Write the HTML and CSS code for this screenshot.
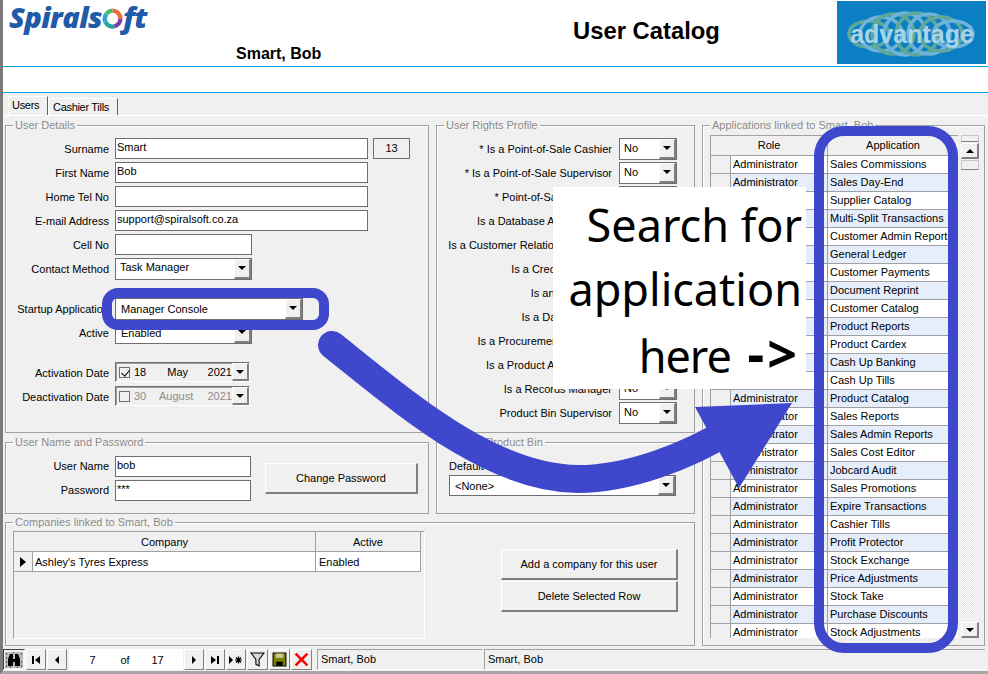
FILE: index.html
```html
<!DOCTYPE html>
<html lang="en">
<head>
<meta charset="utf-8">
<title>User Catalog</title>
<link rel="stylesheet" href="styles.css">
</head>
<body>
<div class="window">
  <header class="head">
    <div class="brand">
      <div class="logo">Spirals<svg class="logo-o" viewBox="0 0 24 24"><path d="M12 3a9 9 0 0 1 9 9" fill="none" stroke="#f26b38" stroke-width="5"/><path d="M21 12a9 9 0 0 1-7 9" fill="none" stroke="#7b3fa0" stroke-width="5"/><path d="M14 21a9 9 0 0 1-10-5" fill="none" stroke="#26a69a" stroke-width="5"/><path d="M4 16a9 9 0 0 1 1-9" fill="none" stroke="#3aa0d8" stroke-width="5"/><path d="M5 7a9 9 0 0 1 7-4" fill="none" stroke="#4cb86a" stroke-width="5"/></svg>ft</div>
      <div class="who">Smart, Bob</div>
    </div>
    <h1 class="title">User Catalog</h1>
    <div class="adv">
      <svg viewBox="0 0 149 63" class="adv-art">
        <g fill="none" stroke-width="3.500">
          <ellipse cx="32" cy="33" rx="20" ry="13" stroke="#5fa79a"/>
          <ellipse cx="44" cy="33" rx="21" ry="17" stroke="#6fb4d8"/>
          <ellipse cx="56" cy="33" rx="21" ry="20" stroke="#5fa79a"/>
          <ellipse cx="68" cy="33" rx="21" ry="21" stroke="#6fb4d8"/>
          <ellipse cx="80" cy="33" rx="21" ry="21" stroke="#5fa79a"/>
          <ellipse cx="92" cy="33" rx="21" ry="20" stroke="#6fb4d8"/>
          <ellipse cx="104" cy="33" rx="21" ry="17" stroke="#5fa79a"/>
          <ellipse cx="116" cy="33" rx="20" ry="13" stroke="#6fb4d8"/>
        </g>
        <text x="75" y="42" class="adv-text">advantage</text>
      </svg>
    </div>
  </header>
  <div class="strip"></div>

  <nav class="tabs">
    <span class="tab tab-on">Users</span>
    <span class="tab">Cashier Tills</span>
  </nav>

  <main class="panels">
    <fieldset class="group g-details">
      <legend>User Details</legend>
      <div class="row"><label>Surname</label><div class="line"><span class="field f-wide">Smart</span><span class="field f-id">13</span></div></div>
      <div class="row"><label>First Name</label><span class="field f-wide">Bob</span></div>
      <div class="row"><label>Home Tel No</label><span class="field f-wide"></span></div>
      <div class="row"><label>E-mail Address</label><span class="field f-wide">support@spiralsoft.co.za</span></div>
      <div class="row"><label>Cell No</label><span class="field f-short"></span></div>
      <div class="row"><label>Contact Method</label><div class="combo c-short"><span>Task Manager</span><i></i></div></div>
      <div class="row row-gap"><label>Startup Application</label><div class="combo c-start c-low"><span>Manager Console</span><i></i></div></div>
      <div class="row"><label>Active</label><div class="combo c-short c-low"><span>Enabled</span><i></i></div></div>
      <div class="row row-gap"><label>Activation Date</label><div class="date"><b class="check on"></b><span class="d1">18</span><span class="d2">May</span><span class="d3">2021</span><i></i></div></div>
      <div class="row"><label>Deactivation Date</label><div class="date off"><b class="check"></b><span class="d1">30</span><span class="d2">August</span><span class="d3">2021</span><i></i></div></div>
    </fieldset>

    <fieldset class="group g-rights">
      <legend>User Rights Profile</legend>
      <div class="rrow"><label>* Is a Point-of-Sale Cashier</label><div class="combo c-no"><span>No</span><i></i></div></div>
      <div class="rrow"><label>* Is a Point-of-Sale Supervisor</label><div class="combo c-no"><span>No</span><i></i></div></div>
      <div class="rrow"><label>* Point-of-Sale Manager</label><div class="combo c-no"><span>No</span><i></i></div></div>
      <div class="rrow"><label>Is a Database Administrator</label><div class="combo c-no"><span>No</span><i></i></div></div>
      <div class="rrow"><label>Is a Customer Relations Manager</label><div class="combo c-no"><span>No</span><i></i></div></div>
      <div class="rrow"><label>Is a Credit Controller</label><div class="combo c-no"><span>No</span><i></i></div></div>
      <div class="rrow"><label>Is an Accountant</label><div class="combo c-no"><span>No</span><i></i></div></div>
      <div class="rrow"><label>Is a Data Manager</label><div class="combo c-no"><span>No</span><i></i></div></div>
      <div class="rrow"><label>Is a Procurement Controller</label><div class="combo c-no"><span>No</span><i></i></div></div>
      <div class="rrow"><label>Is a Product Administrator</label><div class="combo c-no"><span>No</span><i></i></div></div>
      <div class="rrow"><label>Is a Records Manager</label><div class="combo c-no"><span>No</span><i></i></div></div>
      <div class="rrow"><label>Product Bin Supervisor</label><div class="combo c-no"><span>No</span><i></i></div></div>
    </fieldset>

    <fieldset class="group g-apps">
      <legend>Applications linked to Smart, Bob</legend>
      <div class="apps">
        <div class="apps-clip">
          <table class="apps-table">
            <colgroup><col class="col-sel"><col class="col-role"><col class="col-app"></colgroup>
            <thead><tr><th colspan="2">Role</th><th>Application</th></tr></thead>
            <tbody>
              <tr><td></td><td>Administrator</td><td>Sales Commissions</td></tr>
              <tr><td></td><td>Administrator</td><td>Sales Day-End</td></tr>
              <tr><td></td><td>Administrator</td><td>Supplier Catalog</td></tr>
              <tr><td></td><td>Administrator</td><td>Multi-Split Transactions</td></tr>
              <tr><td></td><td>Administrator</td><td>Customer Admin Reports</td></tr>
              <tr><td></td><td>Administrator</td><td>General Ledger</td></tr>
              <tr><td></td><td>Administrator</td><td>Customer Payments</td></tr>
              <tr><td></td><td>Administrator</td><td>Document Reprint</td></tr>
              <tr><td></td><td>Administrator</td><td>Customer Catalog</td></tr>
              <tr><td></td><td>Administrator</td><td>Product Reports</td></tr>
              <tr><td></td><td>Administrator</td><td>Product Cardex</td></tr>
              <tr><td></td><td>Administrator</td><td>Cash Up Banking</td></tr>
              <tr><td></td><td>Administrator</td><td>Cash Up Tills</td></tr>
              <tr><td></td><td>Administrator</td><td>Product Catalog</td></tr>
              <tr><td></td><td>Administrator</td><td>Sales Reports</td></tr>
              <tr><td></td><td>Administrator</td><td>Sales Admin Reports</td></tr>
              <tr><td></td><td>Administrator</td><td>Sales Cost Editor</td></tr>
              <tr><td></td><td>Administrator</td><td>Jobcard Audit</td></tr>
              <tr><td></td><td>Administrator</td><td>Sales Promotions</td></tr>
              <tr><td></td><td>Administrator</td><td>Expire Transactions</td></tr>
              <tr><td></td><td>Administrator</td><td>Cashier Tills</td></tr>
              <tr><td></td><td>Administrator</td><td>Profit Protector</td></tr>
              <tr><td></td><td>Administrator</td><td>Stock Exchange</td></tr>
              <tr><td></td><td>Administrator</td><td>Price Adjustments</td></tr>
              <tr><td></td><td>Administrator</td><td>Stock Take</td></tr>
              <tr><td></td><td>Administrator</td><td>Purchase Discounts</td></tr>
              <tr><td></td><td>Administrator</td><td>Stock Adjustments</td></tr>
            </tbody>
          </table>
        </div>
        <div class="scroll">
          <span class="sb-cap"></span>
          <span class="sb-btn"><i class="up"></i></span>
          <span class="sb-thumb"></span>
          <span class="sb-track"></span>
          <span class="sb-btn"><i></i></span>
        </div>
      </div>
    </fieldset>

    <fieldset class="group g-login">
      <legend>User Name and Password</legend>
      <div class="login">
        <div class="login-fields">
          <div class="row"><label>User Name</label><span class="field f-login">bob</span></div>
          <div class="row"><label>Password</label><span class="field f-login">***</span></div>
        </div>
        <button class="btn btn-pass">Change Password</button>
      </div>
    </fieldset>

    <fieldset class="group g-bin">
      <legend>Default Product Bin</legend>
      <div class="bin-label">Default Product Bin</div>
      <div class="combo c-bin c-low"><span>&lt;None&gt;</span><i></i></div>
    </fieldset>

    <fieldset class="group g-companies">
      <legend>Companies linked to Smart, Bob</legend>
      <div class="companies">
        <div class="co-grid">
          <div class="co-row co-head"><span class="co-sel co-company-h">Company</span><span class="co-active">Active</span></div>
          <div class="co-row co-data"><span class="co-mark"><svg viewBox="0 0 6 10"><path d="M0 0l6 5-6 5z"/></svg></span><span class="co-name">Ashley's Tyres Express</span><span class="co-active co-left">Enabled</span></div>
        </div>
        <div class="co-actions">
          <button class="btn btn-co">Add a company for this user</button>
          <button class="btn btn-co">Delete Selected Row</button>
        </div>
      </div>
    </fieldset>
  </main>

  <footer class="nav">
    <span class="nbtn nb-find"><svg viewBox="0 0 18 16"><rect width="18" height="16" fill="#bbb"/><path d="M3 14V7l2-5h3v5h2V2h3l2 5v7h-5v-4H8v4z"/><path d="M1 2h1M1 6h1M1 10h1M1 14h1M16 2h1M16 10h1M16 14h1M8 0h1M5 15h1M12 15h1" stroke="#000"/></svg></span>
    <span class="nbtn"><svg viewBox="0 0 10 10"><path d="M1 1h2v8H1zM9 1v8L4 5z"/></svg></span>
    <span class="nbtn"><svg viewBox="0 0 10 10"><path d="M7 1v8L3 5z"/></svg></span>
    <span class="counter"><span>7</span><span>of</span><span>17</span></span>
    <span class="nbtn"><svg viewBox="0 0 10 10"><path d="M3 1v8l4-4z"/></svg></span>
    <span class="nbtn"><svg viewBox="0 0 10 10"><path d="M1 1v8l5-4zM7 1h2v8H7z"/></svg></span>
    <span class="nbtn nb-new"><svg viewBox="0 0 14 10"><path d="M0 1v8l4-4z"/><path d="M6 5h7M9.500 1.500v7M7 2.500l5 5M12 2.500l-5 5" stroke="#000" stroke-width="1.200"/></svg></span>
    <span class="nbtn nb-icon"><svg viewBox="0 0 14 14"><path d="M1 1h12L8.500 7v6l-3-1.500V7z" fill="#d8d8d8" stroke="#000"/></svg></span>
    <span class="nbtn nb-icon"><svg viewBox="0 0 14 14"><path d="M1 1h12v12H1z" fill="#808000" stroke="#000"/><path d="M3.500 1.500h7v4h-7z" fill="#c8c890"/><path d="M4 9h6v4H4z" fill="#000"/></svg></span>
    <span class="nbtn nb-icon"><svg viewBox="0 0 14 14"><path d="M1.500 1.500l11 11M12.500 1.500l-11 11" stroke="#f00" stroke-width="2.400"/></svg></span>
    <span class="status s-one">Smart, Bob</span>
    <span class="status s-two">Smart, Bob</span>
  </footer>
</div>

<div class="callout">
  <div>Search for</div>
  <div>application</div>
  <div><span class="here">here</span> <b>-&gt;</b></div>
</div>
<div class="ring ring-start"></div>
<div class="ring ring-app"></div>
<svg class="arrow" viewBox="0 0 988 674">
  <path d="M332 345C405 403 490 478 578 479C630 479 690 455 730 430" fill="none" stroke="#3f48cc" stroke-width="28" stroke-linecap="round"/>
  <path d="M695 407L792 403L739 488Z" fill="#3f48cc"/>
</svg>
</body>
</html>
```

FILE: styles.css
```css
* { box-sizing: border-box; }
html, body { margin: 0; padding: 0; }
body {
  width: 988px;
  height: 674px;
  overflow: hidden;
  position: relative;
  background: #f0f0f0;
  color: #000;
  font: 11px/13px "Liberation Sans", Arial, sans-serif;
}
.window {
  height: 674px;
  border-left: 3px solid #7a7a7a;
  border-bottom: 3px solid #a8a8a8;
  display: flex;
  flex-direction: column;
}

/* Header */
.head {
  height: 67px;
  flex: none;
  background: #fff;
  border-bottom: 1px solid #00a2e8;
  display: flex;
}
.brand { width: 233px; flex: none; padding: 0 0 0 6px; position: relative; }
.logo {
  font: italic 800 29px/40px "Open Sans", sans-serif;
  color: #1f5ba8;
  letter-spacing: -0.6px;
  display: flex;
  align-items: center;
  margin-top: -3px;
}
.logo-o { width: 21px; height: 21px; margin: 3px 0 0 0; }
.who {
  position: absolute;
  left: 233px;
  top: 45px;
  width: 100px;
  font: bold 16px/18px "Liberation Sans", sans-serif;
}
.title {
  flex: 1;
  margin: 0;
  padding: 17px 0 0 220px;
  text-align: center;
  font: bold 23.800px/27px "Liberation Sans", sans-serif;
}
.adv {
  width: 149px;
  flex: none;
  margin: 1px 2px 2px 0;
  background: #0a7fc4;
}
.adv-art { display: block; width: 149px; height: 63px; }
.adv-text {
  font: bold 25px "Liberation Sans", sans-serif;
  fill: #a8d4e8;
  text-anchor: middle;
}
.strip {
  height: 26px;
  flex: none;
  background: #fff;
  border-bottom: 1px solid #00a2e8;
}

/* Tabs */
.tabs {
  height: 23px;
  flex: none;
  display: flex;
  align-items: flex-end;
  padding-left: 5px;
  border-bottom: 1px solid #fff;
}
.tab {
  height: 17px;
  padding: 2px 0 0 4px;
  width: 70px;
  letter-spacing: -0.3px;
  border-top: 1px solid #fff;
  border-left: 1px solid #fff;
  border-right: 1px solid #606060;
}
.tab-on { height: 19px; padding: 2px 0 0 3px; width: 40px; }

/* Panels */
.panels {
  margin: 3px 0 0 2px;
  display: grid;
  grid-template-columns: 424px 259px 283px;
  grid-template-rows: 314px 79px 130px;
  column-gap: 7px;
  row-gap: 2px;
}
.group {
  margin: 0;
  padding: 0;
  min-width: 0;
  border: 1px solid #a0a0a0;
  box-shadow: inset 1px 1px 0 #fff;
}
.group legend {
  margin-left: 7px;
  padding: 0 2px;
  color: #8c8c8c;
  line-height: 13px;
}
.g-details { padding-top: 6px; }
.g-rights { padding-top: 6px; }
.g-apps { grid-column: 3; grid-row: 1 / 4; padding: 3px 0 0 7px; }
.g-apps legend, .g-companies legend { margin-left: 0; }
.g-login { margin-top: 1px; padding-top: 7px; }
.g-bin { margin-top: 1px; padding: 5px 0 0 12px; }
.g-bin legend { margin-left: -3px; }
.g-companies { grid-column: 1 / 3; padding: 2px 0 0 7px; }

.row {
  display: grid;
  grid-template-columns: 103px 1fr;
  column-gap: 6px;
  height: 24px;
}
.row-gap { margin-top: 16px; }
.row label, .rrow label { text-align: right; padding-top: 5px; white-space: nowrap; }
.login .row label { padding-top: 4px; }
.line { display: flex; gap: 5px; }
.field {
  display: block;
  height: 21px;
  background: #fff;
  border: 1px solid #6e6e6e;
  padding: 2px 1px;
}
.f-wide { width: 253px; }
.f-id { width: 37px; background: #f0f0f0; text-align: center; padding-top: 3px; }
.f-short { width: 137px; }
.f-login { width: 136px; }

.combo {
  height: 22px;
  background: #fff;
  border: 1px solid #6e6e6e;
  display: flex;
  justify-content: space-between;
}
.combo span { padding: 3px 4px; }
.c-short span { padding-top: 2px; }
.combo.c-low span { padding: 4px 5px; }
.combo i, .date i, .sb-btn {
  flex: none;
  position: relative;
  display: block;
  background: #f0f0f0;
  border-top: 1px solid #fff;
  border-left: 1px solid #fff;
  border-right: 2px solid #808080;
  border-bottom: 2px solid #808080;
}
.combo i { width: 17px; }
.combo i::after, .date i::after, .sb-btn i {
  content: "";
  position: absolute;
  left: 3px;
  top: 6px;
  border-left: 4px solid transparent;
  border-right: 4px solid transparent;
  border-top: 4px solid #000;
}
.c-short { width: 137px; }
.c-start { width: 188px; }
.c-no { width: 58px; }
.c-bin { width: 227px; height: 21px; }

.date {
  width: 135px;
  height: 20px;
  border: 1px solid #6e6e6e;
  border-right-color: #fff;
  border-bottom-color: #fff;
  display: flex;
  align-items: center;
  padding-left: 3px;
  box-shadow: inset 1px 1px 0 #a0a0a0;
}
.date i { width: 17px; height: 18px; margin-left: auto; }
.date.off span { color: #8c8c8c; }
.check {
  width: 11px;
  height: 11px;
  border: 1px solid #707070;
  background: #f0f0f0;
  position: relative;
}
.check.on::after {
  content: "";
  position: absolute;
  left: 3px;
  top: 0;
  width: 4px;
  height: 7px;
  border-right: 1.500px solid #000;
  border-bottom: 1.500px solid #000;
  transform: rotate(40deg);
}
.d1 { margin-left: 4px; width: 24px; }
.d2 { width: 40px; text-align: center; }
.date.off .d2 { margin-left: -3px; width: 43px; }
.d3 { margin-left: 10px; }

.rrow {
  display: grid;
  grid-template-columns: 175px 58px;
  column-gap: 7px;
  height: 24px;
}

/* Applications grid */
.apps { display: flex; }
.apps-clip { width: 248px; height: 503px; overflow: hidden; flex: none; }
.apps-table {
  width: 248px;
  table-layout: fixed;
  border-collapse: collapse;
}
.col-sel { width: 20px; }
.col-role { width: 97px; }
.col-app { width: 131px; }
.apps-table th, .apps-table td {
  border: 1px solid #a0a0a0;
  padding: 0 2px;
  height: 18px;
  font-weight: normal;
  white-space: nowrap;
  overflow: hidden;
  text-align: left;
}
.apps-table thead th { height: 20px; text-align: center; background: #f0f0f0; }
.apps-table td:first-child { background: #f0f0f0; padding: 0; }
.apps-table tbody tr { background: #fff; }
.apps-table tbody tr:nth-child(even) { background: #e6edfb; }
.scroll {
  margin-left: 3px;
  width: 18px;
  height: 503px;
  display: flex;
  flex-direction: column;
  gap: 1px;
}
.sb-cap { height: 7px; border: 1px solid #c8c8c8; border-bottom-color: #808080; background: #f0f0f0; }
.sb-btn { height: 16px; }
.sb-btn i { display: block; left: 4px; top: 5px; }
.sb-btn i.up { border-top: 0; border-bottom: 4px solid #000; }
.sb-thumb { height: 10px; background: #f0f0f0; border: 1px solid #c8c8c8; border-bottom-color: #808080; }
.sb-track {
  flex: 1;
  background-color: #f6f6f6;
  background-image: repeating-conic-gradient(#e4e4e4 0 25%, #fff 0 50%);
  background-size: 2px 2px;
}

/* Login */
.login { display: flex; align-items: flex-start; }
.login-fields { width: 259px; }
.btn {
  display: block;
  background: #f0f0f0;
  font: inherit;
  color: #000;
  padding: 0;
  border: 0;
  border-top: 1px solid #fff;
  border-left: 1px solid #fff;
  border-right: 2px solid #808080;
  border-bottom: 2px solid #808080;
}
.btn-pass { width: 153px; height: 31px; margin-top: 7px; }
.bin-label { height: 13px; margin-top: 6px; }
.g-bin .combo { margin-top: 2px; }

/* Companies */
.companies { display: flex; align-items: flex-start; }
.co-grid {
  width: 412px;
  height: 108px;
  border-top: 1px solid #a0a0a0;
  border-left: 1px solid #a0a0a0;
  border-right: 1px solid #fff;
  border-bottom: 1px solid #fff;
}
.co-row { display: flex; height: 20px; width: 407px; border-bottom: 1px solid #a0a0a0; }
.co-data { background: #fff; }
.co-head { text-align: center; }
.co-company-h { width: 302px; border-right: 1px solid #a0a0a0; padding-top: 4px; }
.co-active { width: 105px; border-right: 1px solid #a0a0a0; padding-top: 4px; text-align: center; }
.co-left { text-align: left; padding-left: 3px; }
.co-mark { width: 19px; background: #f0f0f0; border-right: 1px solid #a0a0a0; display: flex; align-items: center; justify-content: center; }
.co-mark svg { width: 6px; height: 10px; }
.co-name { width: 283px; border-right: 1px solid #a0a0a0; padding: 4px 0 0 2px; }
.co-actions { margin: 18px 0 0 76px; display: flex; flex-direction: column; gap: 1px; }
.btn-co { width: 177px; height: 31px; }

/* Navigation bar */
.nav {
  margin-top: 3px;
  height: 21px;
  display: flex;
  align-items: stretch;
  gap: 1px;
}
.nbtn {
  width: 20px;
  flex: none;
  background: #f0f0f0;
  border-top: 1px solid #fff;
  border-left: 1px solid #fff;
  border-right: 1px solid #808080;
  border-bottom: 1px solid #808080;
  display: flex;
  align-items: center;
  justify-content: center;
}
.nbtn svg { width: 10px; height: 10px; }
.nb-find { width: 22px; border: 1px solid #404040; border-right-color: #fff; border-bottom-color: #fff; }
.nb-find svg { width: 18px; height: 16px; }
.nb-new svg { width: 14px; height: 10px; }
.nb-icon { width: 21px; }
.nb-icon svg { width: 15px; height: 15px; }
.counter {
  width: 114px;
  flex: none;
  margin-left: 1px;
  background: #fff;
  display: grid;
  grid-template-columns: 37px 28px 37px;
  padding: 5px 0 0 5px;
  text-align: center;
}
.status {
  flex: none;
  padding: 3px 0 0 3px;
  border-top: 1px solid #a0a0a0;
  border-left: 1px solid #a0a0a0;
  border-bottom: 1px solid #fff;
}
.s-one { width: 165px; margin-left: 4px; }
.s-two { width: 501px; margin-left: 1px; }

/* Annotations laid over the screenshot */
.callout {
  position: absolute;
  left: 553px;
  top: 187px;
  width: 253px;
  height: 202px;
  background: #fff;
  padding: 6px 4px 0 0;
  text-align: right;
  font: 45px/64px "Noto Sans", sans-serif;
}
.here { letter-spacing: -1px; }
.callout b {
  font-weight: 700;
  font-size: 52px;
  letter-spacing: 3px;
  margin: 0 2px 0 5px;
}
.ring { position: absolute; border: 10px solid #3f48cc; }
.ring-start { left: 102px; top: 288px; width: 227px; height: 42px; border-radius: 16px; }
.ring-app { left: 814px; top: 126px; width: 144px; height: 527px; border-radius: 30px; }
.arrow { position: absolute; left: 0; top: 0; width: 988px; height: 674px; pointer-events: none; }
```
